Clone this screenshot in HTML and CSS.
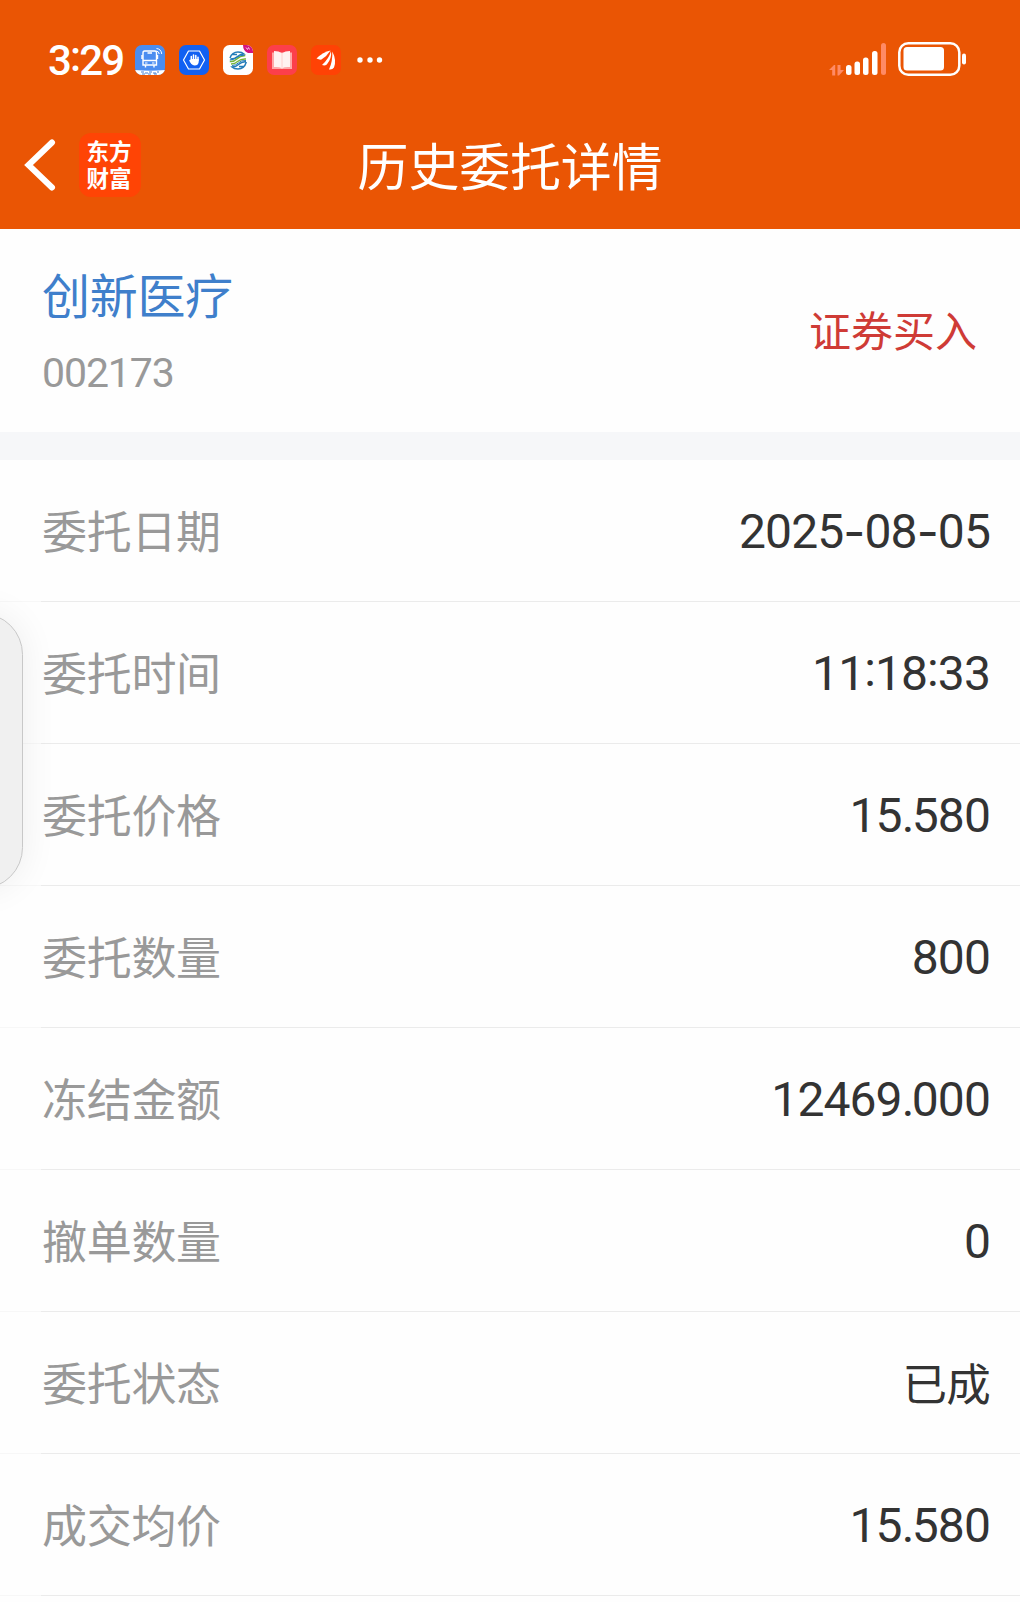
FILE: index.html
```html
<!DOCTYPE html>
<html lang="zh-CN">
<head>
<meta charset="utf-8">
<title>历史委托详情</title>
<link rel="stylesheet" href="styles.css">
</head>
<body>
<header class="header">
  <div class="status">
    <span class="time">3<span class="colon">:</span>29</span>
    <div class="apps">
      <svg class="app" viewBox="0 0 30 30">
        <defs><clipPath id="tile"><rect width="30" height="30" rx="7"/></clipPath></defs>
        <g clip-path="url(#tile)">
          <rect width="30" height="30" fill="#4b8df0"/>
          <path d="M0 25q15 1.500 30 0v5H0z" fill="#fff"/>
        </g>
        <path d="M6 27h3m1 1h3m1-1h3m1 1h3m1-1h2M7 29h3m3 0h3m3 0h3" stroke="#477fd0" stroke-width="1"/>
        <path d="M9.500 6h10.500q1.500 0 1.500 2v12H8V8q0-2 1.500-2z" fill="none" stroke="#fff" stroke-width="1.400"/>
        <path d="M8 15.500h13.500M7 10v4m15.500-4v4M10.500 20v2.500m8.500-2.500v2.500M12.500 8h4.500" stroke="#fff" stroke-width="1.400"/>
        <path d="M10 18h2.500m4.500 0h2.500" stroke="#fff" stroke-width="1.200"/>
        <path d="M21.500 6q2.500.5 2.700 3M21.500 3.500q4.800.5 5.200 5.500" fill="none" stroke="#fff" stroke-width="1"/>
      </svg>
      <svg class="app" viewBox="0 0 30 30">
        <rect width="30" height="30" rx="7" fill="#1260f2"/>
        <path d="M9.500 6h11l5 9-5 9h-11l-5-9z" fill="none" stroke="#fff" stroke-width="1.200" stroke-linejoin="round"/>
        <path d="M12.300 15v-3.400m2.200 3V10m2.300 4.600v-4m2.200 5v-3.400M11 15.500l2 3" stroke="#fff" stroke-width="1.500" stroke-linecap="round"/>
        <path d="M11.700 14h8v3q-.5 3.500-4 3.500-2.500 0-4-3z" fill="#fff"/>
      </svg>
      <svg class="app" viewBox="0 0 30 30">
        <rect width="30" height="30" rx="6.500" fill="#fff"/>
        <path d="M20 0h3.500A6.500 6.500 0 0 1 30 6.500V8h-5q-5-2-5-8z" fill="#d3157f"/>
        <path d="M23 2.500l1.500 2 1-2 1 2" fill="none" stroke="#f7bfdd" stroke-width="1"/>
        <g fill="none" stroke-width="1.500">
          <path d="M7 13q2-6 8-6 4 0 6 2-4 0-6.500 2.500T7.500 14M9.500 9.500H14M23.300 17q-2 7-8.300 7-4 0-6-2 4 0 6.500-2.500t7.500-3M20.500 21.500H16" stroke="#247db9"/>
          <path d="M6.800 16.500q4 .5 7-2.500t8.500-3.500M8 19q4 0 7-2.700t8-2.300" stroke="#78b63d"/>
          <path d="M6.800 15q4 0 7-2.500t7.500-2.200M9 20.500q4 0 6.500-2.700t7.500-2.300" stroke="#247db9" stroke-width="1"/>
        </g>
      </svg>
      <svg class="app" viewBox="0 0 30 30">
        <rect width="30" height="30" rx="7" fill="#fc3f4b"/>
        <path d="M5 7.500h20v16.500H5z" fill="#ffa9a8"/>
        <path d="M7 6q5 0 8 2.200v15Q12 21.500 7 22zM23 6q-5 0-8 2.200v15q3-1.700 8-1.200z" fill="#fff3f1"/>
        <path d="M15 8v16" stroke="#ffd0ce"/>
      </svg>
      <svg class="app" viewBox="0 0 30 30">
        <rect width="30" height="30" rx="7" fill="#ff4205"/>
        <path d="M5.500 13.500Q12 7 19.500 5.500 16 11 10.500 14.500q-2 .5-5-1z" fill="#fff"/>
        <path d="M11 20Q18 13.500 20 6q1 7.500-4.200 13.500-2 1.500-4.800.5z" fill="#fff"/>
        <path d="M18 24.500q3.800-8 3.300-18 4.500 8.500 1.700 16-1.500 2.500-5 2z" fill="#fff"/>
      </svg>
    </div>
    <svg class="more" viewBox="0 0 28 6" fill="#fff"><circle cx="3" cy="3" r="2.700"/><circle cx="13" cy="3" r="2.700"/><circle cx="22.500" cy="3" r="2.700"/></svg>
    <svg class="signal" viewBox="0 0 138 36">
      <g fill="#ff8a65">
        <path d="M0 28l5-5h1.200v10.500H3.200V28zM8.500 23h3v5h3.500l-5 5.500H8.500z"/>
        <rect x="52" y="1" width="5" height="32" rx="2.500"/>
      </g>
      <g fill="#fff">
        <rect x="17" y="23" width="5.500" height="10" rx="2.500"/>
        <rect x="25.500" y="19.500" width="5.500" height="13.500" rx="2.500"/>
        <rect x="34" y="15.500" width="5.500" height="17.500" rx="2.500"/>
        <rect x="43" y="9" width="5.500" height="24" rx="2.500"/>
        <rect x="74.500" y="5" width="40.500" height="23.500" rx="3.500"/>
        <rect x="133" y="11.500" width="4" height="11" rx="2"/>
      </g>
      <rect x="70.300" y="1.300" width="60" height="31.500" rx="9" fill="none" stroke="#fff" stroke-width="2.500"/>
    </svg>
  </div>
  <div class="nav">
    <div class="nav-side">
      <svg class="back" viewBox="0 0 32 52"><path d="M28 3.500L4.500 26l23.500 22.500" fill="none" stroke="#fff" stroke-width="6" stroke-linecap="round" stroke-linejoin="miter"/></svg>
      <div class="brand"><span>东方</span><span>财富</span></div>
    </div>
    <h1 class="title">历史委托详情</h1>
    <div class="nav-side"></div>
  </div>
</header>
<main>
  <section class="stock">
    <div>
      <div class="name">创新医疗</div>
      <div class="code">002173</div>
    </div>
    <div class="side">证券买入</div>
  </section>
  <dl class="rows">
    <div class="row"><dt>委托日期</dt><dd>2025<span class="dash">-</span>08<span class="dash">-</span>05</dd></div>
    <div class="row"><dt>委托时间</dt><dd>11<span class="colon">:</span>18<span class="colon">:</span>33</dd></div>
    <div class="row"><dt>委托价格</dt><dd>15<span class="dot">.</span>580</dd></div>
    <div class="row"><dt>委托数量</dt><dd>800</dd></div>
    <div class="row"><dt>冻结金额</dt><dd>12469<span class="dot">.</span>000</dd></div>
    <div class="row"><dt>撤单数量</dt><dd>0</dd></div>
    <div class="row"><dt>委托状态</dt><dd class="cjk">已成</dd></div>
    <div class="row"><dt>成交均价</dt><dd>15<span class="dot">.</span>580</dd></div>
  </dl>
</main>
<div class="handle"></div>
</body>
</html>
```
FILE: styles.css
```css
* { box-sizing: border-box; }
body {
  margin: 0;
  height: 1602px;
  overflow: hidden;
  position: relative;
  background: #fefefe;
  color: #333;
  font-family: Roboto, "Noto Sans CJK SC", sans-serif;
}
.header {
  height: 229px;
  background: #ea5504;
  color: #fff;
}
.status {
  display: flex;
  align-items: center;
  height: 120px;
  padding: 0 53px 0 48px;
}
.time {
  width: 87px;
  padding-top: 2px;
  font-size: 42px;
  font-weight: 500;
  letter-spacing: -1.9px;
  line-height: 60px;
}
.colon { vertical-align: 4px; line-height: 0; }
.apps { display: flex; gap: 14px; }
.app { display: block; width: 30px; height: 30px; }
.more { width: 28px; height: 6px; margin-left: 16px; }
.signal { width: 138px; height: 36px; margin-left: auto; }
.nav {
  display: flex;
  align-items: center;
  height: 90px;
}
.nav-side {
  flex: 1;
  display: flex;
  align-items: center;
  padding-left: 24px;
}
.back { width: 32px; height: 52px; }
.brand {
  display: flex;
  flex-direction: column;
  align-items: center;
  justify-content: center;
  width: 62px;
  height: 64px;
  margin-left: 23px;
  padding: 0 2px 3px 0;
  border-radius: 12px;
  background: #ff4405;
  font: 700 22.5px/27px "Noto Sans CJK SC", sans-serif;
}
.title {
  margin: 0;
  padding-bottom: 2px;
  font: 400 51px/70px "Noto Sans CJK SC", sans-serif;
  letter-spacing: -0.2px;
}
.stock {
  display: flex;
  justify-content: space-between;
  height: 231px;
  padding: 33px 43px 0 42px;
  border-bottom: 28px solid #f6f7f9;
}
.name {
  font-size: 48px;
  line-height: 72px;
  color: #3f7fcb;
  letter-spacing: -0.3px;
}
.code {
  margin-top: 9px;
  font-size: 41px;
  line-height: 60px;
  color: #999;
  letter-spacing: -1.1px;
}
.side {
  padding-top: 41px;
  font-size: 42px;
  line-height: 60px;
  color: #cf3b36;
}
.rows { margin: 0; }
.row {
  display: flex;
  justify-content: space-between;
  align-items: center;
  height: 142px;
  padding: 0 30px 0 42px;
  border-bottom: 1px solid;
  border-image: linear-gradient(90deg, #f7f7f7 42px, #ebebeb 42px) 1;
}
dt {
  padding-bottom: 2px;
  font-size: 45px;
  letter-spacing: -0.3px;
  color: #999;
}
dd {
  margin: 0;
  padding-top: 2px;
  font-size: 48px;
  letter-spacing: -0.9px;
}
.cjk {
  padding: 0 0 2px;
  font-size: 44.5px;
  letter-spacing: -0.8px;
}
.dash { font-family: Inter, sans-serif; vertical-align: -1px; line-height: 0; }
.dot { letter-spacing: -2.6px; }
.handle {
  position: absolute;
  left: -60px;
  top: 613px;
  width: 83px;
  height: 276px;
  border: 1px solid #c8c8c8;
  border-radius: 42px;
  background: #f0f0f0;
  box-shadow: 0 0 36px rgba(0, 0, 0, 0.07);
}
```
